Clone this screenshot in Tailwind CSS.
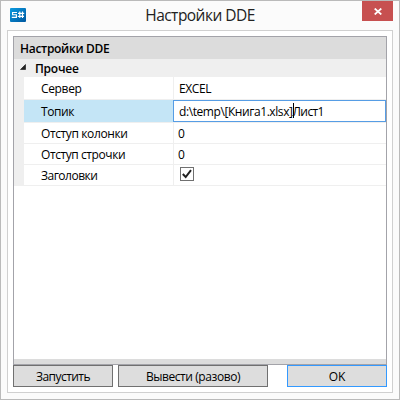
<!DOCTYPE html>
<html lang="ru">
<head>
<meta charset="utf-8">
<title>Настройки DDE</title>
<script src="https://cdn.jsdelivr.net/npm/@tailwindcss/browser@4"></script>
</head>
<body class="w-[400px] h-[400px] overflow-hidden font-['Open_Sans','Noto_Sans',sans-serif] text-[12px] text-black">
<div class="w-[400px] h-[400px] border border-[#bababa] bg-[#fbfbfb] flex flex-col px-[6px] pb-[6px]">
  <header class="relative h-[29px] shrink-0 flex justify-center">
    <svg class="absolute left-[3px] top-[7px]" width="16" height="14" viewBox="0 0 16 14">
      <defs><linearGradient id="g" x1="0" y1="0" x2="1" y2="1"><stop offset="0" stop-color="#0b9be0"/><stop offset="1" stop-color="#0058a0"/></linearGradient></defs>
      <rect width="16" height="14" rx="1" fill="url(#g)"/>
      <path d="M7 4.5H2.6v2.2h3.8v2.6H1.8M8 5.4h6.2M7.8 8.4h6.2M9.8 3.5v6.6M12.5 3.5v6.6" fill="none" stroke="#fff" stroke-width="1.15"/>
    </svg>
    <h1 class="text-[15.5px] leading-[29px] tracking-[-0.53px] whitespace-nowrap text-[#222]">Настройки DDE</h1>
    <button class="absolute right-0 top-0 w-[31px] h-[20px] bg-[#c75050] flex items-center justify-center">
      <svg class="ml-px mt-px" width="8" height="7" viewBox="0 0 8 7"><path d="M.7.5 7.3 6.5M7.3.5.7 6.5" stroke="#fff" stroke-width="1.7"/></svg>
    </button>
  </header>
  <main class="flex-1 border border-[#d0d0d0] bg-white px-[5px] pt-[5px]">
    <section class="h-[329px] border border-[#a3a3a9] flex flex-col">
      <h2 class="h-[22px] shrink-0 bg-[#dcdcdc] pl-[6px] leading-[23px] font-semibold tracking-[-0.3px]">Настройки DDE</h2>
      <div class="flex flex-col bg-[#efefef]">
        <div class="h-[18px] flex items-center font-semibold">
          <svg class="ml-[6px] mr-[9px] -mt-[3px]" width="6" height="6" viewBox="0 0 6 6"><path d="M5.5.5v5H.5z" fill="#222" stroke="#111" stroke-width=".6"/></svg>
          <span class="relative top-px tracking-[-0.25px]">Прочее</span>
        </div>
        <div class="ml-[10px] grid grid-cols-[149px_1fr] grid-rows-[22px_22px_20px_20px_20px] gap-px pb-px">
          <div class="bg-white pl-[17px] leading-[24px] tracking-[-0.35px]">Сервер</div><div class="bg-white pl-[5px] leading-[24px] tracking-[-0.4px]">EXCEL</div>
          <div class="bg-[#c4e5f6] pl-[17px] leading-[24px] tracking-[-0.4px]">Топик</div>
          <div class="-ml-px bg-white border border-[#569de5] pl-[5px] leading-[22px] h-[22px] flex"><span class="tracking-[-0.42px]">d:\temp\[Книга1.xlsx]</span><i class="w-px h-[15px] mt-[2px] -mr-px bg-black"></i><span class="tracking-[-0.6px]">Лист1</span></div>
          <div class="bg-white pl-[17px] leading-[22px] tracking-[-0.38px]">Отступ колонки</div><div class="bg-white pl-[4px] leading-[22px]">0</div>
          <div class="bg-white pl-[17px] leading-[22px] tracking-[-0.42px]">Отступ строчки</div><div class="bg-white pl-[4px] leading-[22px]">0</div>
          <div class="bg-white pl-[17px] leading-[22px] tracking-[-0.5px]">Заголовки</div>
          <div class="bg-white pl-[6px] pt-[2px]"><svg width="14" height="14" viewBox="0 0 14 14"><rect x=".5" y=".5" width="13" height="13" fill="#fff" stroke="#707070"/><path d="M2.8 7l2.9 3L11 3.2" fill="none" stroke="#212121" stroke-width="2"/></svg></div>
        </div>
      </div>
      <div class="flex-1"></div>
      <div class="h-[5px] bg-[#dcdcdc]"></div>
    </section>
    <footer class="flex leading-[22px]">
      <button class="w-[100px] h-[22px] border border-[#707070] bg-[#dddddd] tracking-[-0.55px]">Запустить</button>
      <button class="ml-[5px] w-[150px] h-[22px] border border-[#707070] bg-[#dddddd] tracking-[-0.42px]">Вывести (разово)</button>
      <button class="ml-auto w-[100px] h-[22px] border border-[#3399ff] bg-[#dddddd]">OK</button>
    </footer>
  </main>
</div>
</body>
</html>
